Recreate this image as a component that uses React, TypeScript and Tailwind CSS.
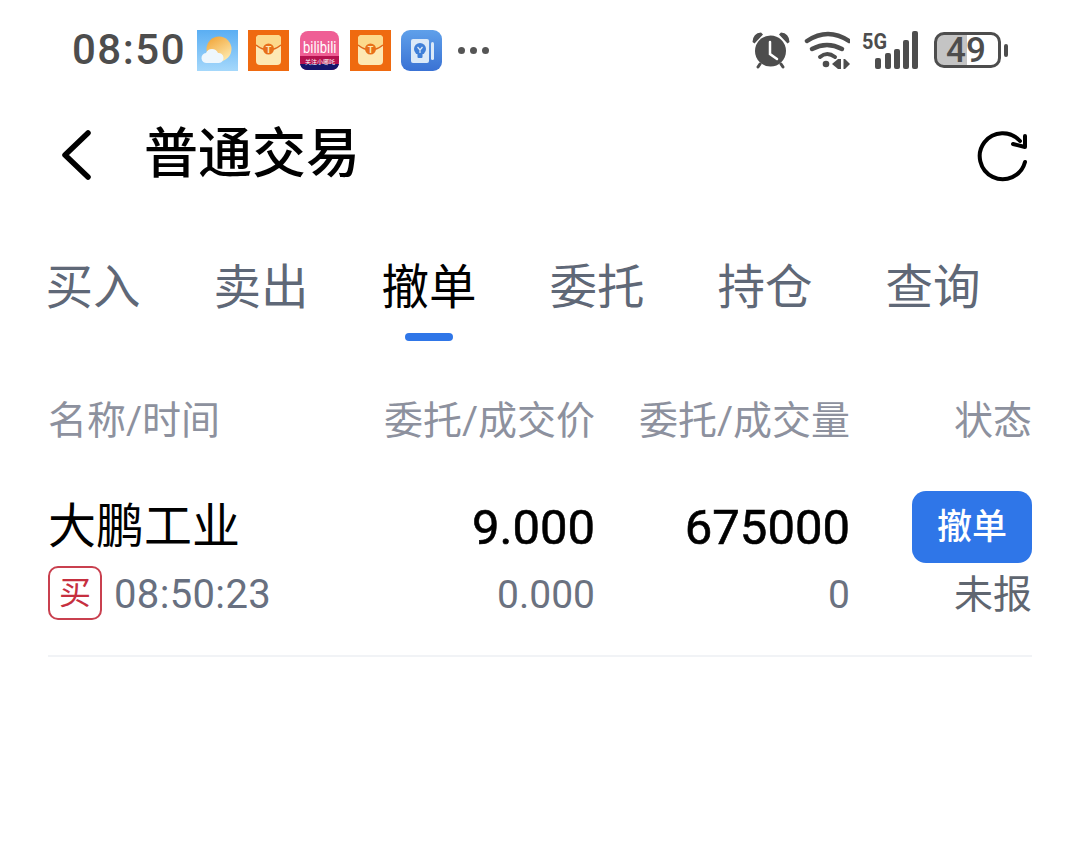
const tabs = ["买入", "卖出", "撤单", "委托", "持仓", "查询"];
const cjk = "font-['Roboto','Noto_Sans_CJK_SC',sans-serif]";
const cols = "grid grid-cols-[290px_257px_255px_182px]";

function Weather() {
  return (
    <svg width="41" height="41" viewBox="0 0 41 41">
      <defs>
        <linearGradient id="sky" x1="0" y1="0" x2="0" y2="1">
          <stop offset="0" stopColor="#5aaef3" />
          <stop offset="1" stopColor="#a5d8fb" />
        </linearGradient>
        <linearGradient id="sun" x1="0" y1="0" x2="0.6" y2="1">
          <stop offset="0" stopColor="#f0a030" />
          <stop offset="1" stopColor="#fde6a8" />
        </linearGradient>
      </defs>
      <rect width="41" height="41" fill="url(#sky)" />
      <circle cx="22" cy="19" r="12.500" fill="url(#sun)" />
      <path d="M10 33a5 5 0 0 1-1-10 6.500 6.500 0 0 1 12 0 5 5 0 0 1 1 10z" fill="#eef7fd" />
    </svg>
  );
}

function RedPacket() {
  return (
    <svg width="41" height="41" viewBox="0 0 41 41">
      <rect width="41" height="41" fill="#ef6a10" />
      <rect x="8" y="5" width="25" height="30" rx="4" fill="#fde8b4" />
      <path d="M8 15q12.500 10 25 0V9a4 4 0 0 0-4-4H12a4 4 0 0 0-4 4z" fill="#fcd98c" />
      <path d="M8 15q12.500 10 25 0" fill="none" stroke="#e0661a" strokeWidth="1.500" />
      <circle cx="20.500" cy="19" r="5.500" fill="#e8701a" />
      <text x="20.500" y="22.500" textAnchor="middle" fontSize="9" fontWeight="700" fontFamily="Roboto" fill="#fde8b4">T</text>
    </svg>
  );
}

function Bili() {
  return (
    <svg width="39" height="39" viewBox="0 0 39 39">
      <rect width="39" height="39" rx="8" fill="#ef5f95" />
      <path d="M0 25H39V31a8 8 0 0 1-8 8H8a8 8 0 0 1-8-8z" fill="#b5114f" />
      <path d="M0 33H39a8 8 0 0 1-8 6H8a8 8 0 0 1-8-6z" fill="#16156b" />
      <text transform="translate(3 22) scale(1 1.200)" fontSize="13" fontFamily="Roboto" fill="#fff">bilibili</text>
      <text x="5" y="33" fontSize="6" fontFamily="Noto Sans CJK SC" fill="#fff">关注小哪吒</text>
    </svg>
  );
}

function Notes() {
  return (
    <svg width="41" height="41" viewBox="0 0 41 41">
      <defs>
        <linearGradient id="note" x1="0" y1="0" x2="0" y2="1">
          <stop offset="0" stopColor="#5fa0ea" />
          <stop offset="1" stopColor="#3a72d4" />
        </linearGradient>
      </defs>
      <rect width="41" height="41" rx="9" fill="url(#note)" />
      <rect x="10" y="9" width="18" height="24" rx="2" fill="#dbe9f8" />
      <rect x="30" y="12" width="3" height="18" rx="1.500" fill="#dbe9f8" />
      <circle cx="19" cy="19" r="6" fill="#3f7fd8" />
      <rect x="16.500" y="24" width="5" height="4" rx="1" fill="#3f7fd8" />
      <path d="M16.500 17l2.500 3 2.500-3M19 20v3" fill="none" stroke="#dbe9f8" strokeWidth="1.200" />
    </svg>
  );
}

function StatusIcons() {
  return (
    <div className="flex items-center">
      {/* 闹钟 */}
      <svg width="38" height="38" viewBox="0 0 38 38" className="mr-[14px]">
        <circle cx="18.500" cy="20" r="15.500" fill="#4d4d4d" />
        <path d="M0.500 11Q1 2 9 1.500L11 3.500 2.500 12.500zM37.500 11Q37 2 29 1.500L27 3.500 35.500 12.500z" fill="#4d4d4d" />
        <path d="M8 33l-2 3M29 33l2 3" stroke="#4d4d4d" strokeWidth="3" strokeLinecap="round" />
        <path d="M18 11v12l7 5" fill="none" stroke="#fff" strokeWidth="2.500" strokeLinecap="round" />
      </svg>
      {/* wifi */}
      <svg width="46" height="38" viewBox="0 0 46 38" className="mr-[12px]">
        <path d="M3 10Q24-4 45 10" fill="none" stroke="#4d4d4d" strokeWidth="4.500" strokeLinecap="round" />
        <path d="M8 18Q23 10 38 18" fill="none" stroke="#4d4d4d" strokeWidth="4.500" strokeLinecap="round" />
        <path d="M16 26Q23 20 31 26" fill="none" stroke="#4d4d4d" strokeWidth="4" strokeLinecap="round" />
        <circle cx="22" cy="33" r="3.300" fill="#4d4d4d" />
        <path d="M28 33l6-5h3v10h-3z" fill="#4d4d4d" />
        <path d="M39.500 28h1.500l5 5-5 5h-1.500z" fill="#4d4d4d" />
      </svg>
      {/* 5G 信号 */}
      <svg width="56" height="38" viewBox="0 0 56 38" className="mr-[16px] overflow-visible">
        <text x="0" y="18" fontSize="22" fontWeight="700" fontFamily="Roboto" textLength="25" lengthAdjust="spacingAndGlyphs" fill="#4d4d4d">5G</text>
        <rect x="13" y="27" width="6" height="11" rx="2" fill="#4d4d4d" />
        <rect x="23" y="22" width="6" height="16" rx="2" fill="#4d4d4d" />
        <rect x="32" y="18" width="6" height="20" rx="2" fill="#4d4d4d" />
        <rect x="41" y="9" width="6" height="29" rx="2" fill="#4d4d4d" />
        <rect x="50" y="0" width="6" height="38" rx="2" fill="#4d4d4d" />
      </svg>
      {/* 电池 */}
      <svg width="76" height="38" viewBox="0 0 76 38" className="overflow-visible">
        <path d="M10 3h23v32H10a8 8 0 0 1-8-8V11a8 8 0 0 1 8-8z" fill="#c4c4c4" />
        <rect x="1.500" y="2.500" width="64" height="33" rx="8.500" fill="none" stroke="#4d4d4d" strokeWidth="3" />
        <rect x="70" y="13" width="4" height="13" rx="2" fill="#4d4d4d" />
        <text x="32" y="31" textAnchor="middle" fontSize="35" fontWeight="500" fontFamily="Roboto" fill="#4d4d4d">49</text>
      </svg>
    </div>
  );
}

export default function App() {
  return (
    <div className={`w-[1080px] h-[843px] bg-white overflow-hidden ${cjk}`}>
      {/* 状态栏 */}
      <div className="h-[100px] flex items-center justify-between pl-[72px] pr-[70px]">
        <div className="flex items-center">
          <span className="text-[42px] font-medium text-[#4d4d4d] tracking-[1.5px] leading-none w-[125px]">08:50</span>
          <div className="flex items-center gap-[10px]">
            <Weather />
            <RedPacket />
            <span className="ml-[1px] mr-[1px] flex"><Bili /></span>
            <RedPacket />
            <Notes />
          </div>
          <div className="ml-[16px] flex gap-[5px]">
            <span className="w-[7px] h-[7px] rounded-full bg-[#555]" />
            <span className="w-[7px] h-[7px] rounded-full bg-[#555]" />
            <span className="w-[7px] h-[7px] rounded-full bg-[#555]" />
          </div>
        </div>
        <StatusIcons />
      </div>

      {/* 标题 */}
      <div className="h-[110px] flex items-center justify-between pl-[47px] pr-[48px]">
        <div className="flex items-center">
          <svg width="60" height="60" viewBox="0 0 60 60">
            <path d="M41 8L18 30L41 52" fill="none" stroke="#000" strokeWidth="5.500" strokeLinecap="round" strokeLinejoin="round" />
          </svg>
          <h1 className="ml-[37px] text-[54px] font-medium text-black leading-none">普通交易</h1>
        </div>
        <svg width="60" height="60" viewBox="0 0 60 60">
          <path d="M53 37A23 23 0 1 1 48 16" fill="none" stroke="#000" strokeWidth="4" strokeLinecap="round" />
          <path d="M53 11L53 22L41 19" fill="none" stroke="#000" strokeWidth="4" strokeLinecap="round" strokeLinejoin="round" />
        </svg>
      </div>

      {/* 标签 */}
      <div className="flex px-[9px] mt-[46px]">
        {tabs.map((t) => (
          <div key={t} className="w-[168px] flex flex-col items-center">
            <span className={`text-[47.5px] leading-[64px] ${t === "撤单" ? "text-black" : "text-[#5f6877]"}`}>{t}</span>
            <span className={`mt-[13px] w-[48px] h-[8px] rounded-full ${t === "撤单" ? "bg-[#2f76e8]" : "bg-transparent"}`} />
          </div>
        ))}
      </div>

      {/* 表头 */}
      <div className={`${cols} px-[48px] mt-[53px] text-[39px] leading-[54px] text-[#8d919e]`}>
        <span>名称/时间</span>
        <span className="text-right">委托/成交价</span>
        <span className="text-right">委托/成交量</span>
        <span className="text-right">状态</span>
      </div>

      {/* 委托行 */}
      <div className="mx-[48px] mt-[43px] pb-[32px] border-b-2 border-[#f1f3f6]">
        <div className={`${cols} items-center h-[72px]`}>
          <span className="text-[48px] text-black leading-none">大鹏工业</span>
          <span className="text-right text-[49px] text-black leading-none [-webkit-text-stroke:0.6px_#000]">9.000</span>
          <span className="text-right text-[49px] text-black leading-none [-webkit-text-stroke:0.6px_#000]">675000</span>
          <div className="flex justify-end">
            <button className="w-[120px] h-[72px] rounded-[14px] bg-[#2f76e8] text-white text-[35px] font-medium leading-none">撤单</button>
          </div>
        </div>
        <div className={`${cols} items-center h-[60px] text-[#6b7280]`}>
          <div className="flex items-center">
            <span className="w-[54px] h-[54px] border-2 border-[#c9404f] rounded-[10px] text-[#c62f3f] text-[32px] flex items-center justify-center leading-none">买</span>
            <span className="ml-[12px] mt-[4px] text-[40px] tracking-[0.35px] leading-none text-[#687080]">08:50:23</span>
          </div>
          <span className="mt-[4px] text-right text-[39px] leading-none">0.000</span>
          <span className="mt-[4px] text-right text-[39px] leading-none">0</span>
          <span className="mt-[4px] text-right text-[39px] leading-none text-[#5f6670]">未报</span>
        </div>
      </div>
    </div>
  );
}
